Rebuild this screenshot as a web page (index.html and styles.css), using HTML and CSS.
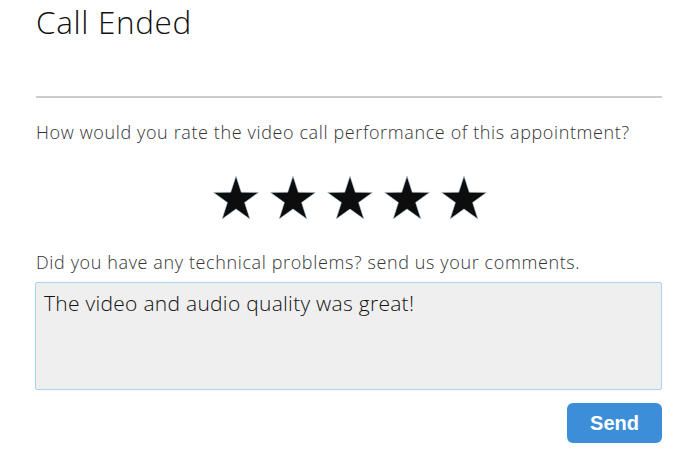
FILE: index.html
```html
<!DOCTYPE html>
<html>
<head>
<meta charset="utf-8">
<link rel="stylesheet" href="styles.css">
</head>
<body>
<div class="page">
  <h1 class="title">Call Ended</h1>
  <hr class="rule">
  <p class="question">How would you rate the video call performance of this appointment?</p>
  <div class="stars">
    <svg class="star" viewBox="0 0 46 44"><polygon points="23,0 28.4,16.6 46,16.8 31.8,27.2 37.2,44 23,33.8 8.8,44 14.2,27.2 0,16.8 17.6,16.6"/></svg>
    <svg class="star" viewBox="0 0 46 44"><polygon points="23,0 28.4,16.6 46,16.8 31.8,27.2 37.2,44 23,33.8 8.8,44 14.2,27.2 0,16.8 17.6,16.6"/></svg>
    <svg class="star" viewBox="0 0 46 44"><polygon points="23,0 28.4,16.6 46,16.8 31.8,27.2 37.2,44 23,33.8 8.8,44 14.2,27.2 0,16.8 17.6,16.6"/></svg>
    <svg class="star" viewBox="0 0 46 44"><polygon points="23,0 28.4,16.6 46,16.8 31.8,27.2 37.2,44 23,33.8 8.8,44 14.2,27.2 0,16.8 17.6,16.6"/></svg>
    <svg class="star" viewBox="0 0 46 44"><polygon points="23,0 28.4,16.6 46,16.8 31.8,27.2 37.2,44 23,33.8 8.8,44 14.2,27.2 0,16.8 17.6,16.6"/></svg>
  </div>
  <p class="question q2">Did you have any technical problems? send us your comments.</p>
  <textarea class="comments">The video and audio quality was great!</textarea>
  <div class="actions">
    <button class="send">Send</button>
  </div>
</div>
</body>
</html>
```
FILE: styles.css
```css
html, body {
  margin: 0;
  padding: 0;
  background: #ffffff;
}
.page {
  margin: 0 34px 0 35px;
  font-family: "Open Sans", "Lato", sans-serif;
  font-weight: 300;
  color: #222;
}
.title {
  margin: 0;
  padding-left: 1px;
  font-size: 31.5px;
  font-weight: 300;
  line-height: 43px;
  letter-spacing: 0.65px;
  color: #111;
}
.rule {
  margin: 53px 0 0 1px;
  border: 0;
  height: 2px;
  background: #cccccc;
}
.question {
  margin: 22px 0 0 1px;
  font-size: 18px;
  line-height: 24px;
  letter-spacing: 0.62px;
  color: #333;
}
.stars {
  display: flex;
  justify-content: center;
  gap: 11px;
  margin-top: 32px;
  padding-left: 3px;
}
.star {
  width: 46px;
  height: 43px;
  fill: #0d0d0d;
  stroke: #b9cfe0;
  stroke-width: 0.6;
}
.q2 {
  margin-top: 31px;
}
.comments {
  display: block;
  box-sizing: border-box;
  width: 100%;
  height: 108px;
  margin-top: 8px;
  padding: 7px 8px;
  background: #efefef;
  border: 1px solid #a9d3ef;
  border-radius: 2px;
  font-family: "Open Sans", "Lato", sans-serif;
  font-weight: 300;
  font-size: 21px;
  line-height: 26px;
  letter-spacing: 0.28px;
  color: #111;
  resize: none;
  outline: none;
}
.actions {
  display: flex;
  justify-content: flex-end;
  margin-top: 13px;
}
.send {
  width: 95px;
  height: 40px;
  border: 0;
  border-radius: 6px;
  background: #3d8ed8;
  color: #fff;
  font-family: "Liberation Sans", Arial, sans-serif;
  font-weight: 700;
  font-size: 20px;
}
```
